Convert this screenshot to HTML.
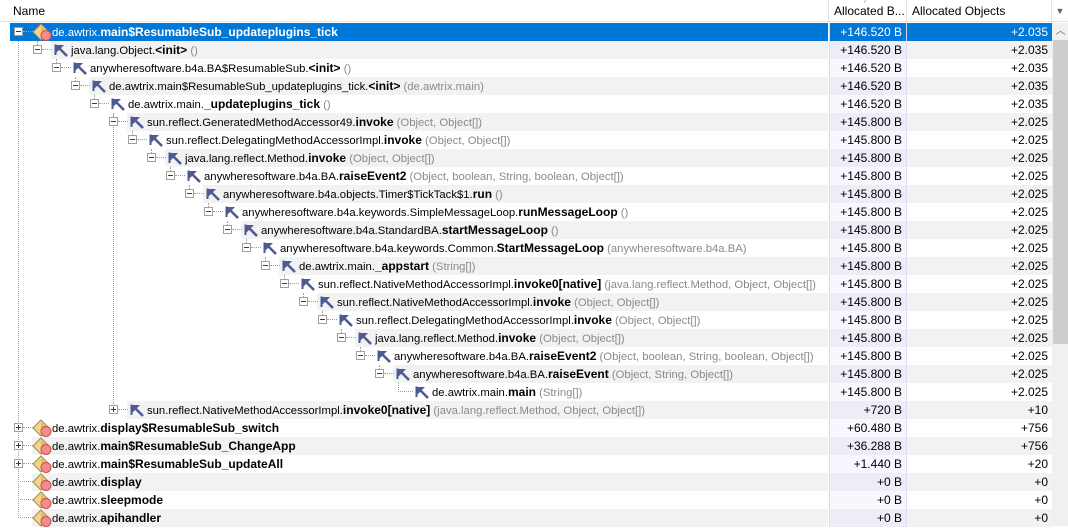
<!DOCTYPE html>
<html><head><meta charset="utf-8">
<style>
*{margin:0;padding:0;box-sizing:border-box}
body{width:1068px;height:526px;overflow:hidden;background:#fff;font-family:"Liberation Sans",sans-serif;font-size:12px;color:#000;position:relative}
.hd{position:absolute;top:0;left:0;width:1068px;height:22px;background:#fff;border-bottom:1px solid #e3e3e3}
.hd div{position:absolute;top:0;height:22px;line-height:22px;border-right:1px solid #e3e3e3;padding-left:5px}
.r{position:absolute;left:0;width:1052px;height:18px;line-height:18px;--l:0}
.bg{position:absolute;top:0;height:18px;right:224px;left:calc(32px + var(--l)*19px)}
.s .bg{background:#f2f2f2}
.box{position:absolute;top:4px;width:9px;height:9px;border:1px solid #a0a0a0;background:#fff;left:calc(14px + var(--l)*19px)}
.box::before{content:"";position:absolute;left:1px;top:3px;width:5px;height:1px;background:#3c3c3c}
.p::after{content:"";position:absolute;left:3px;top:1px;width:1px;height:5px;background:#3c3c3c}
.h{position:absolute;top:8px;height:1px;width:10px;border-top:1px dotted #a0a0a0;left:calc(23px + var(--l)*19px)}
.lf .h{left:calc(18px + var(--l)*19px);width:15px}
.v{position:absolute;top:0;height:4px;border-left:1px dotted #a0a0a0;left:calc(18px + var(--l)*19px)}
.ic{position:absolute;top:1px;width:17px;height:16px;left:calc(34px + var(--l)*19px)}
.t{position:absolute;top:0;white-space:nowrap;overflow:hidden;font-size:11.3px;left:calc(52px + var(--l)*19px);width:calc(776px - var(--l)*19px)}
.t b{font-weight:bold;font-size:12px}
.t i{font-style:normal;color:#8a8a8a}
.c1{position:absolute;left:829px;width:78px;top:0;height:18px;text-align:right;padding-right:4px;background:#f7f8fe;border-left:1px solid #d8dcf4;border-right:1px solid #d8dcf4}
.s .c1{background:#ecedf6}
.c2{position:absolute;left:907px;width:145px;top:0;height:18px;text-align:right;padding-right:4px}
.s .c2{background:#f2f2f2}
.sel .bg{left:10px;background:#0078d7}
.sel .c1,.sel .c2{background:#0078d7;color:#fff}
.sel .t{color:#fff}
.vl{position:absolute;border-left:1px dotted #a0a0a0;width:0}
.ci{position:absolute;left:32px;top:0;width:20px;height:18px}
</style></head><body>
<svg width="0" height="0" style="position:absolute">
<defs>
<symbol id="ar" viewBox="0 0 17 16"><path d="M14 14 L5 5" stroke="#4e5a92" stroke-width="2.6" fill="none"/><path d="M2.5 13 V2.5" stroke="#4e5a92" stroke-width="2" fill="none"/><path d="M3 3 H11 L3 11Z" fill="#4e5a92"/></symbol>
<symbol id="cl" viewBox="0 0 20 18"><path d="M9 1 L17 9 L9 17 L1 9Z" fill="#f2d48a" stroke="#a88846" stroke-width="1"/><path d="M9 3 L15 9 L9 15" fill="#e6b860"/><circle cx="14" cy="12.5" r="5" fill="#f28c8c" stroke="#c85050" stroke-width="1"/></symbol>
</defs></svg>

<div class="hd">
<div style="left:0;width:829px;padding-left:13px">Name</div>
<div style="left:829px;width:78px">Allocated B...</div>
<div style="left:907px;width:145px">Allocated Objects</div>
<div style="left:1052px;width:16px;border:none;padding:0;text-align:center;color:#606060;font-size:9px">▼</div>
<span style="position:absolute;left:862px;top:-5px;font-size:8px;color:#999">▽</span>
</div>

<div class="vl" style="left:18px;top:36px;height:482px"></div>
<div class="vl" style="left:113px;top:113px;height:297px"></div>

<div class="r sel" style="top:23px;--l:0"><div class="bg"></div><span class="box"></span><span class="h"></span><svg class="ci"><use href="#cl"/></svg><span class="t">de.awtrix.<b>main$ResumableSub_updateplugins_tick</b></span><div class="c1">+146.520 B</div><div class="c2">+2.035</div></div>
<div class="r s" style="top:41px;--l:1"><div class="bg"></div><span class="v"></span><span class="box"></span><span class="h"></span><svg class="ic"><use href="#ar"/></svg><span class="t">java.lang.Object.<b>&lt;init&gt;</b> <i>()</i></span><div class="c1">+146.520 B</div><div class="c2">+2.035</div></div>
<div class="r" style="top:59px;--l:2"><div class="bg"></div><span class="v"></span><span class="box"></span><span class="h"></span><svg class="ic"><use href="#ar"/></svg><span class="t">anywheresoftware.b4a.BA$ResumableSub.<b>&lt;init&gt;</b> <i>()</i></span><div class="c1">+146.520 B</div><div class="c2">+2.035</div></div>
<div class="r s" style="top:77px;--l:3"><div class="bg"></div><span class="v"></span><span class="box"></span><span class="h"></span><svg class="ic"><use href="#ar"/></svg><span class="t">de.awtrix.main$ResumableSub_updateplugins_tick.<b>&lt;init&gt;</b> <i>(de.awtrix.main)</i></span><div class="c1">+146.520 B</div><div class="c2">+2.035</div></div>
<div class="r" style="top:95px;--l:4"><div class="bg"></div><span class="v"></span><span class="box"></span><span class="h"></span><svg class="ic"><use href="#ar"/></svg><span class="t">de.awtrix.main.<b>_updateplugins_tick</b> <i>()</i></span><div class="c1">+146.520 B</div><div class="c2">+2.035</div></div>
<div class="r s" style="top:113px;--l:5"><div class="bg"></div><span class="v"></span><span class="box"></span><span class="h"></span><svg class="ic"><use href="#ar"/></svg><span class="t">sun.reflect.GeneratedMethodAccessor49.<b>invoke</b> <i>(Object, Object[])</i></span><div class="c1">+145.800 B</div><div class="c2">+2.025</div></div>
<div class="r" style="top:131px;--l:6"><div class="bg"></div><span class="v"></span><span class="box"></span><span class="h"></span><svg class="ic"><use href="#ar"/></svg><span class="t">sun.reflect.DelegatingMethodAccessorImpl.<b>invoke</b> <i>(Object, Object[])</i></span><div class="c1">+145.800 B</div><div class="c2">+2.025</div></div>
<div class="r s" style="top:149px;--l:7"><div class="bg"></div><span class="v"></span><span class="box"></span><span class="h"></span><svg class="ic"><use href="#ar"/></svg><span class="t">java.lang.reflect.Method.<b>invoke</b> <i>(Object, Object[])</i></span><div class="c1">+145.800 B</div><div class="c2">+2.025</div></div>
<div class="r" style="top:167px;--l:8"><div class="bg"></div><span class="v"></span><span class="box"></span><span class="h"></span><svg class="ic"><use href="#ar"/></svg><span class="t">anywheresoftware.b4a.BA.<b>raiseEvent2</b> <i>(Object, boolean, String, boolean, Object[])</i></span><div class="c1">+145.800 B</div><div class="c2">+2.025</div></div>
<div class="r s" style="top:185px;--l:9"><div class="bg"></div><span class="v"></span><span class="box"></span><span class="h"></span><svg class="ic"><use href="#ar"/></svg><span class="t">anywheresoftware.b4a.objects.Timer$TickTack$1.<b>run</b> <i>()</i></span><div class="c1">+145.800 B</div><div class="c2">+2.025</div></div>
<div class="r" style="top:203px;--l:10"><div class="bg"></div><span class="v"></span><span class="box"></span><span class="h"></span><svg class="ic"><use href="#ar"/></svg><span class="t">anywheresoftware.b4a.keywords.SimpleMessageLoop.<b>runMessageLoop</b> <i>()</i></span><div class="c1">+145.800 B</div><div class="c2">+2.025</div></div>
<div class="r s" style="top:221px;--l:11"><div class="bg"></div><span class="v"></span><span class="box"></span><span class="h"></span><svg class="ic"><use href="#ar"/></svg><span class="t">anywheresoftware.b4a.StandardBA.<b>startMessageLoop</b> <i>()</i></span><div class="c1">+145.800 B</div><div class="c2">+2.025</div></div>
<div class="r" style="top:239px;--l:12"><div class="bg"></div><span class="v"></span><span class="box"></span><span class="h"></span><svg class="ic"><use href="#ar"/></svg><span class="t">anywheresoftware.b4a.keywords.Common.<b>StartMessageLoop</b> <i>(anywheresoftware.b4a.BA)</i></span><div class="c1">+145.800 B</div><div class="c2">+2.025</div></div>
<div class="r s" style="top:257px;--l:13"><div class="bg"></div><span class="v"></span><span class="box"></span><span class="h"></span><svg class="ic"><use href="#ar"/></svg><span class="t">de.awtrix.main.<b>_appstart</b> <i>(String[])</i></span><div class="c1">+145.800 B</div><div class="c2">+2.025</div></div>
<div class="r" style="top:275px;--l:14"><div class="bg"></div><span class="v"></span><span class="box"></span><span class="h"></span><svg class="ic"><use href="#ar"/></svg><span class="t">sun.reflect.NativeMethodAccessorImpl.<b>invoke0[native]</b> <i>(java.lang.reflect.Method, Object, Object[])</i></span><div class="c1">+145.800 B</div><div class="c2">+2.025</div></div>
<div class="r s" style="top:293px;--l:15"><div class="bg"></div><span class="v"></span><span class="box"></span><span class="h"></span><svg class="ic"><use href="#ar"/></svg><span class="t">sun.reflect.NativeMethodAccessorImpl.<b>invoke</b> <i>(Object, Object[])</i></span><div class="c1">+145.800 B</div><div class="c2">+2.025</div></div>
<div class="r" style="top:311px;--l:16"><div class="bg"></div><span class="v"></span><span class="box"></span><span class="h"></span><svg class="ic"><use href="#ar"/></svg><span class="t">sun.reflect.DelegatingMethodAccessorImpl.<b>invoke</b> <i>(Object, Object[])</i></span><div class="c1">+145.800 B</div><div class="c2">+2.025</div></div>
<div class="r s" style="top:329px;--l:17"><div class="bg"></div><span class="v"></span><span class="box"></span><span class="h"></span><svg class="ic"><use href="#ar"/></svg><span class="t">java.lang.reflect.Method.<b>invoke</b> <i>(Object, Object[])</i></span><div class="c1">+145.800 B</div><div class="c2">+2.025</div></div>
<div class="r" style="top:347px;--l:18"><div class="bg"></div><span class="v"></span><span class="box"></span><span class="h"></span><svg class="ic"><use href="#ar"/></svg><span class="t">anywheresoftware.b4a.BA.<b>raiseEvent2</b> <i>(Object, boolean, String, boolean, Object[])</i></span><div class="c1">+145.800 B</div><div class="c2">+2.025</div></div>
<div class="r s" style="top:365px;--l:19"><div class="bg"></div><span class="v"></span><span class="box"></span><span class="h"></span><svg class="ic"><use href="#ar"/></svg><span class="t">anywheresoftware.b4a.BA.<b>raiseEvent</b> <i>(Object, String, Object[])</i></span><div class="c1">+145.800 B</div><div class="c2">+2.025</div></div>
<div class="r lf" style="top:383px;--l:20"><div class="bg"></div><span class="v" style="height:9px"></span><span class="h"></span><svg class="ic"><use href="#ar"/></svg><span class="t">de.awtrix.main.<b>main</b> <i>(String[])</i></span><div class="c1">+145.800 B</div><div class="c2">+2.025</div></div>
<div class="r s" style="top:401px;--l:5"><div class="bg"></div><span class="box p"></span><span class="h"></span><svg class="ic"><use href="#ar"/></svg><span class="t">sun.reflect.NativeMethodAccessorImpl.<b>invoke0[native]</b> <i>(java.lang.reflect.Method, Object, Object[])</i></span><div class="c1">+720 B</div><div class="c2">+10</div></div>
<div class="r" style="top:419px;--l:0"><div class="bg"></div><span class="box p"></span><span class="h"></span><svg class="ci"><use href="#cl"/></svg><span class="t">de.awtrix.<b>display$ResumableSub_switch</b></span><div class="c1">+60.480 B</div><div class="c2">+756</div></div>
<div class="r s" style="top:437px;--l:0"><div class="bg"></div><span class="box p"></span><span class="h"></span><svg class="ci"><use href="#cl"/></svg><span class="t">de.awtrix.<b>main$ResumableSub_ChangeApp</b></span><div class="c1">+36.288 B</div><div class="c2">+756</div></div>
<div class="r" style="top:455px;--l:0"><div class="bg"></div><span class="box p"></span><span class="h"></span><svg class="ci"><use href="#cl"/></svg><span class="t">de.awtrix.<b>main$ResumableSub_updateAll</b></span><div class="c1">+1.440 B</div><div class="c2">+20</div></div>
<div class="r s lf" style="top:473px;--l:0"><div class="bg"></div><span class="h"></span><svg class="ci"><use href="#cl"/></svg><span class="t">de.awtrix.<b>display</b></span><div class="c1">+0 B</div><div class="c2">+0</div></div>
<div class="r lf" style="top:491px;--l:0"><div class="bg"></div><span class="h"></span><svg class="ci"><use href="#cl"/></svg><span class="t">de.awtrix.<b>sleepmode</b></span><div class="c1">+0 B</div><div class="c2">+0</div></div>
<div class="r s lf" style="top:509px;--l:0"><div class="bg"></div><span class="h"></span><svg class="ci"><use href="#cl"/></svg><span class="t">de.awtrix.<b>apihandler</b></span><div class="c1">+0 B</div><div class="c2">+0</div></div>

<div style="position:absolute;left:1052px;top:23px;width:16px;height:503px;background:#f0f0f0"></div>
<div style="position:absolute;left:1053px;top:23px;width:15px;height:17px;color:#606060;font-size:10px;text-align:center;line-height:17px">︿</div>
<div style="position:absolute;left:1053px;top:40px;width:15px;height:304px;background:#cdcdcd"></div>
</body></html>
